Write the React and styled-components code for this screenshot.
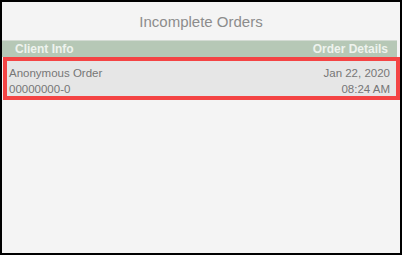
import React from 'react'
import styled, { createGlobalStyle } from 'styled-components'

const Global = createGlobalStyle`
  html, body { margin: 0; padding: 0; background: #fff; }
  body { font-family: "Liberation Sans", Arial, sans-serif; }
`

const Frame = styled.div`
  width: 402px;
  height: 255px;
  box-sizing: border-box;
  border: 2px solid #000;
  background: #f4f4f4;
  display: flex;
  flex-direction: column;
`

const Title = styled.div`
  height: 38px;
  display: flex;
  align-items: center;
  justify-content: center;
  font-size: 15px;
  color: #8c8c8c;
`

const HeaderBar = styled.div`
  height: 16px;
  margin-right: 3px;
  border-top: 1px solid #d3dbd3;
  background: #b6c8b6;
  display: flex;
  justify-content: space-between;
  align-items: center;
  padding: 0 9px 0 13px;
  font-size: 12px;
  font-weight: bold;
  color: #eef3ee;
`

const OrderRow = styled.div`
  margin-left: 1px;
  height: 43px;
  box-sizing: border-box;
  border: 4px solid ${p => (p.selected ? '#f44444' : 'transparent')};
  background: #e6e6e6;
  display: flex;
  justify-content: space-between;
  padding: 4px 6px 0 2px;
`

const Col = styled.div`
  display: flex;
  flex-direction: column;
  align-items: ${p => (p.right ? 'flex-end' : 'flex-start')};
  font-size: 11.5px;
  line-height: 16px;
  color: #767676;
`

const orders = [
  { client: 'Anonymous Order', id: '00000000-0', date: 'Jan 22, 2020', time: '08:24 AM' },
]

export default function App() {
  return (
    <>
      <Global />
      <Frame>
        <Title>Incomplete Orders</Title>
        <HeaderBar>
          <span>Client Info</span>
          <span>Order Details</span>
        </HeaderBar>
        {orders.map(o => (
          <OrderRow key={o.id} selected>
            <Col>
              <span>{o.client}</span>
              <span>{o.id}</span>
            </Col>
            <Col right>
              <span>{o.date}</span>
              <span>{o.time}</span>
            </Col>
          </OrderRow>
        ))}
      </Frame>
    </>
  )
}
